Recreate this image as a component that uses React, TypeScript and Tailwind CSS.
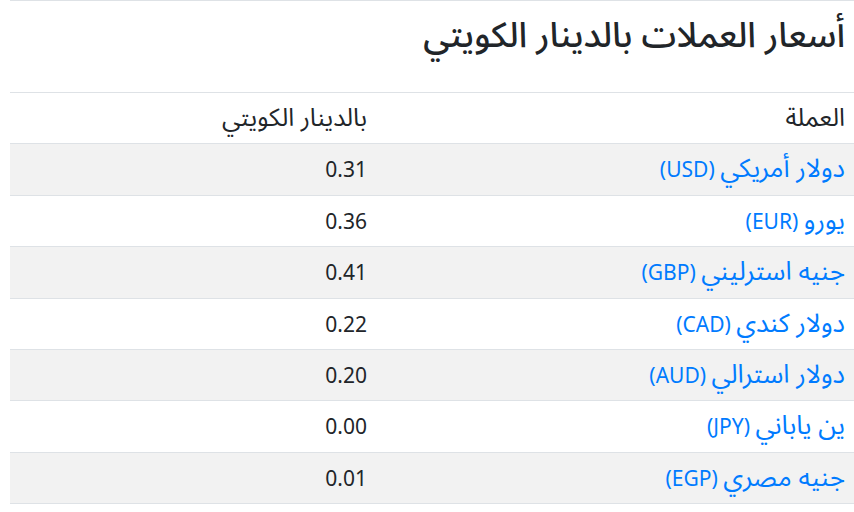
import React from 'react';

const rates = [
  { name: 'دولار أمريكي', code: 'USD', value: '0.31' },
  { name: 'يورو', code: 'EUR', value: '0.36' },
  { name: 'جنيه استرليني', code: 'GBP', value: '0.41' },
  { name: 'دولار كندي', code: 'CAD', value: '0.22' },
  { name: 'دولار استرالي', code: 'AUD', value: '0.20' },
  { name: 'ين ياباني', code: 'JPY', value: '0.00' },
  { name: 'جنيه مصري', code: 'EGP', value: '0.01' },
];

// Arabic runs are set a bit larger so they take the width they have in the picture
const Ar: React.FC<{ children: React.ReactNode; className?: string }> = ({ children, className = 'text-[26px]' }) => (
  <span className={`${className} leading-none`}>{children}</span>
);

const App: React.FC = () => {
  return (
    <div dir="rtl" className="bg-white pl-[10px] text-[#212529]" style={{ fontFamily: '"Noto Sans", "Noto Sans Arabic", sans-serif' }}>
      <div className="border-t border-[#dee2e6] h-[92px] pt-[12px] pr-[9px]">
        <h2 className="text-[35px] leading-[42px] font-medium">أسعار العملات بالدينار الكويتي</h2>
      </div>
      <table className="w-full border-collapse text-[21px]">
        <thead>
          <tr className="border-t border-[#dee2e6]">
            <th className="text-right font-normal py-[10px] pr-[9px] w-[479px]">
              <div className="h-[30.4px] leading-[30.4px]">
                <Ar className="text-[25px]">العملة</Ar>
              </div>
            </th>
            <th className="text-right font-normal py-[10px] pr-[8px]">
              <div className="h-[30.4px] leading-[30.4px]">
                <Ar className="text-[25px]">بالدينار الكويتي</Ar>
              </div>
            </th>
          </tr>
        </thead>
        <tbody>
          {rates.map((r, i) => (
            <tr key={r.code} className={`border-t border-b border-[#dee2e6] ${i % 2 === 0 ? 'bg-[#f2f2f2]' : 'bg-white'}`}>
              <td className="py-[10px] pr-[9px]">
                <div className="h-[30.4px] leading-[30.4px]">
                  <a href="#" className="text-[#007bff]">
                    <Ar>{r.name}</Ar> ({r.code})
                  </a>
                </div>
              </td>
              <td className="py-[10px] pr-[8px]">
                <div className="h-[30.4px] leading-[30.4px]">{r.value}</div>
              </td>
            </tr>
          ))}
        </tbody>
      </table>
    </div>
  );
};

export default App;
